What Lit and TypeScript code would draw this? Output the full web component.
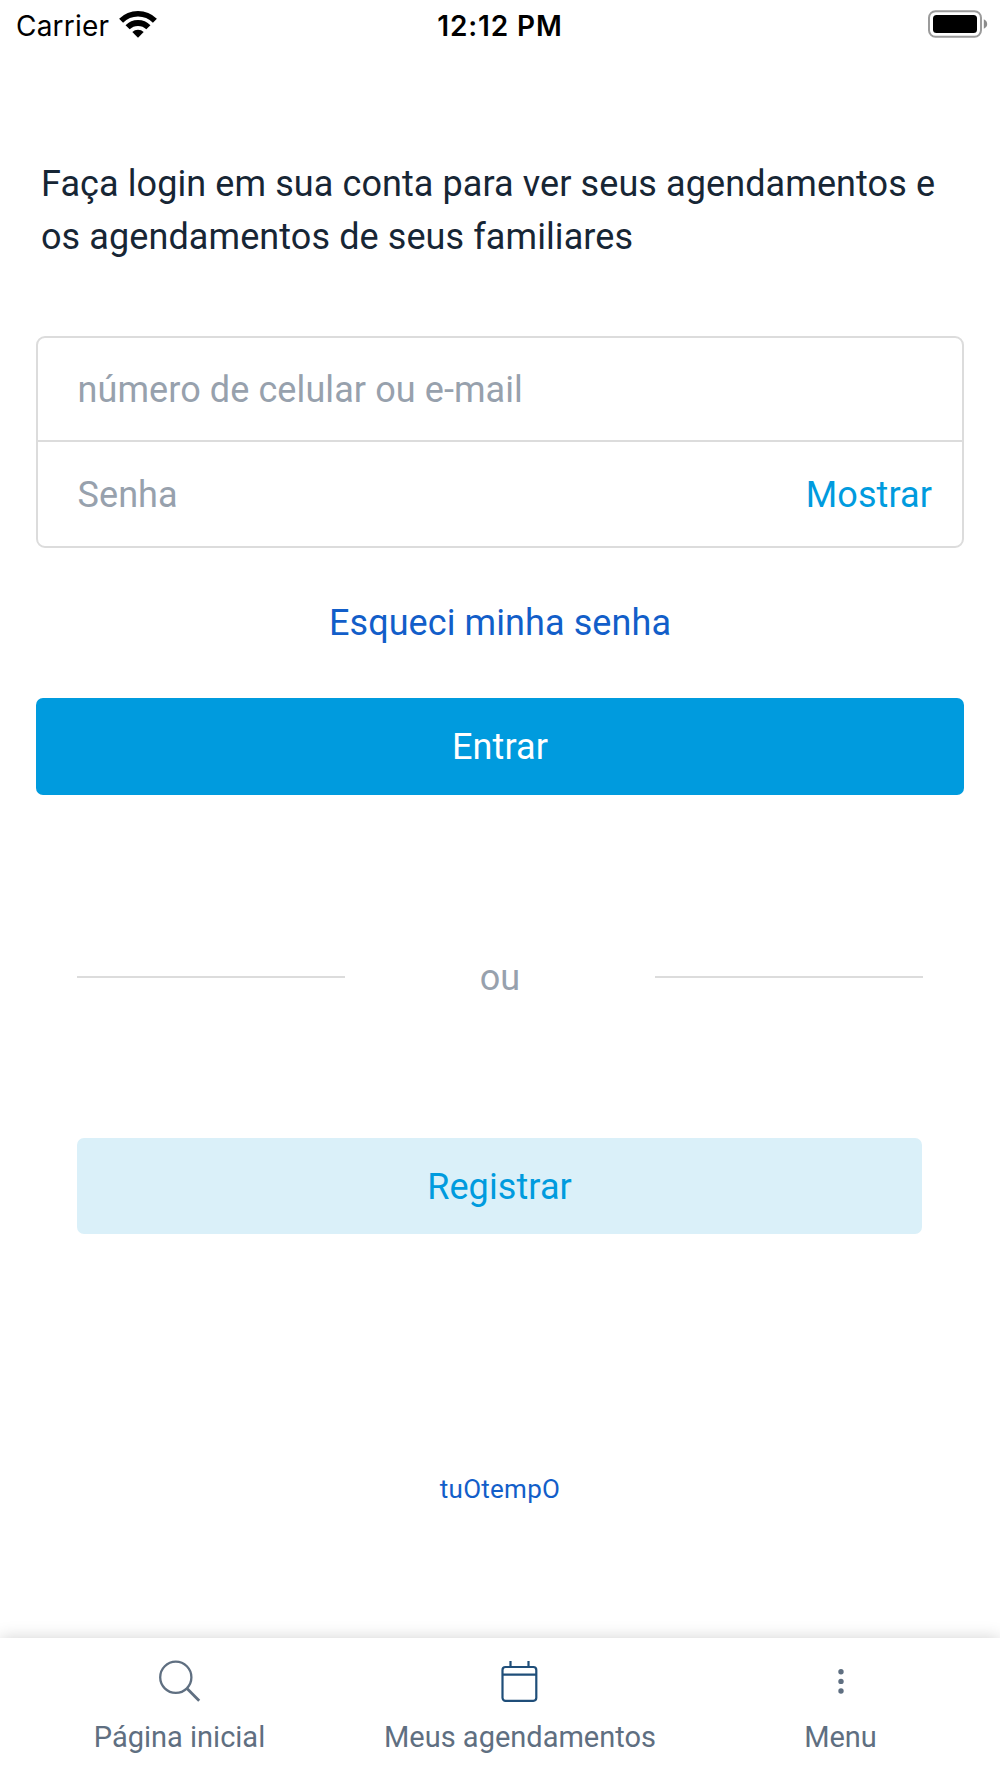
import { LitElement, html, css, svg } from "lit";
import { customElement } from "lit/decorators.js";

const wifiIcon = html`<svg class="wifi" width="38" height="28" viewBox="0 0 38 28" fill="none" stroke="#000">
  <path d="M2.1 10.8A23.9 23.9 0 0 1 35.9 10.8" stroke-width="5.6" />
  <path d="M8.6 17.3A14.7 14.7 0 0 1 29.4 17.3" stroke-width="5.8" />
  <path d="M19 27.7L13.3 22A8.1 8.1 0 0 1 24.7 22Z" fill="#000" stroke="none" />
</svg>`;

const batteryIcon = html`<svg class="battery" width="60" height="28" viewBox="0 0 60 28">
  <rect x="1" y="1.2" width="52" height="25.6" rx="6.5" fill="none" stroke="#9b9b9b" stroke-width="2" />
  <rect x="5" y="5" width="44" height="18" rx="3.5" fill="#000" />
  <path d="M55.8 9.2Q59.2 11 59.2 14T55.8 18.8Z" fill="#8c8c8c" />
</svg>`;

const searchIcon = svg`<g fill="none" stroke="#5f6f81" stroke-width="2.3">
  <circle cx="17.8" cy="18.3" r="15.6" />
  <path d="M29 29.5L41.2 41.7" stroke-width="2.8" />
</g>`;

const calendarIcon = svg`<g fill="none" stroke="#1f4e79" stroke-width="2.2">
  <rect x="4.5" y="8" width="33.8" height="33.8" rx="3" />
  <path d="M4.5 15.7H38.3M12.5 2V8M30.5 2V8" />
</g>`;

const dotsIcon = svg`<g fill="#5f6f81">
  <circle cx="22" cy="12.7" r="2.7" />
  <circle cx="22" cy="22.4" r="2.7" />
  <circle cx="22" cy="32" r="2.7" />
</g>`;

const tabs = [
  { label: "Página inicial", icon: searchIcon },
  { label: "Meus agendamentos", icon: calendarIcon },
  { label: "Menu", icon: dotsIcon },
];

@customElement("app-root")
export class AppRoot extends LitElement {
  static styles = css`
    :host {
      display: flex;
      flex-direction: column;
      box-sizing: border-box;
      width: 1000px;
      height: 1778px;
      overflow: hidden;
      background: #fff;
      color: #172635;
      font: 36px/54px Roboto, sans-serif;
      letter-spacing: 0.09px;
    }
    * { box-sizing: border-box; }
    button {
      display: block;
      margin: 0;
      padding: 0;
      border: 0;
      background: none;
      font: inherit;
      letter-spacing: inherit;
      white-space: nowrap;
    }
    .status {
      display: grid;
      grid-template-columns: 1fr auto 1fr;
      align-items: center;
      height: 52px;
      padding: 0 12px;
      color: #000;
      font: 28px/52px Inter, sans-serif;
      letter-spacing: 0.2px;
    }
    .carrier { display: flex; align-items: center; gap: 10px; padding-left: 4px; }
    .wifi { margin-top: -5px; }
    .time { font-weight: 600; letter-spacing: 0.9px; }
    .battery { justify-self: end; margin-top: -4px; }
    main { flex: 1; padding: 105.5px 36px 0; }
    .intro { margin: 0; padding: 0 5px; line-height: 53.3px; white-space: nowrap; }
    .form { margin-top: 72px; border: 2px solid #dcdcdc; border-radius: 9px; }
    .field {
      display: flex;
      align-items: center;
      justify-content: space-between;
      height: 104px;
      padding: 2px 30px 0 39.5px;
      color: #97a1ad;
    }
    .field:first-child { border-bottom: 2px solid #dcdcdc; }
    .show { color: #009bde; }
    .forgot { margin: 48px auto 0; line-height: 54px; color: #125ec9; }
    .enter {
      width: 100%;
      height: 97px;
      margin-top: 48px;
      border-radius: 7px;
      background: #009bde;
      color: #fff;
    }
    .or {
      display: flex;
      align-items: center;
      justify-content: space-between;
      height: 54px;
      margin: 155px 41px 0;
      color: #97a1ad;
    }
    .or span { padding-top: 2px; }
    .rule { width: 268px; height: 2px; background: #dcdcdc; }
    .register {
      width: 845px;
      height: 96px;
      margin: 134px 0 0 41px;
      padding-top: 1px;
      border-radius: 7px;
      background: #daf0f9;
      color: #009bde;
    }
    .brand {
      margin: 235px auto 0;
      font-size: 26px;
      line-height: 40px;
      letter-spacing: 0.26px;
      color: #125ec9;
    }
    nav {
      display: grid;
      grid-template-columns: 359px 322px 319px;
      height: 140px;
      padding-top: 21px;
      background: #fff;
      box-shadow: 0 0 16px rgba(0, 0, 0, 0.18);
      color: #5f6f81;
      font-size: 29px;
      letter-spacing: 0;
    }
    .tab { display: flex; flex-direction: column; align-items: center; gap: 14px; line-height: 40px; color: inherit; }
    .tab svg { display: block; }
  `;

  render() {
    return html`
      <header class="status">
        <div class="carrier"><span>Carrier</span>${wifiIcon}</div>
        <span class="time">12:12 PM</span>
        ${batteryIcon}
      </header>
      <main>
        <p class="intro">Faça login em sua conta para ver seus agendamentos e<br />os agendamentos de seus familiares</p>
        <section class="form">
          <div class="field"><span>número de celular ou e-mail</span></div>
          <div class="field"><span>Senha</span><button class="show">Mostrar</button></div>
        </section>
        <button class="forgot">Esqueci minha senha</button>
        <button class="enter">Entrar</button>
        <div class="or"><i class="rule"></i><span>ou</span><i class="rule"></i></div>
        <button class="register">Registrar</button>
        <button class="brand">tuOtempO</button>
      </main>
      <nav>
        ${tabs.map(
          (t) => html`<button class="tab">
            <svg width="44" height="44" viewBox="0 0 44 44">${t.icon}</svg>
            <span>${t.label}</span>
          </button>`
        )}
      </nav>
    `;
  }
}
